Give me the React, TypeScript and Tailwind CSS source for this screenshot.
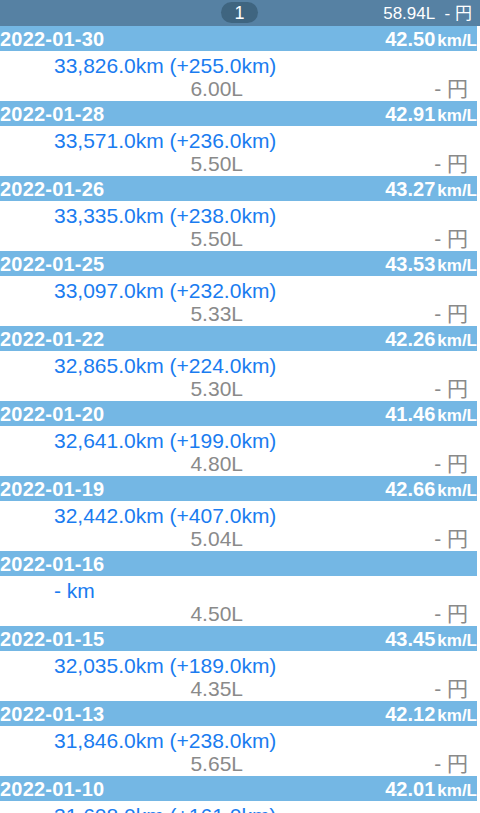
import React from 'react';

type Entry = {
  date: string;
  mileage: string | null;
  odo: string;
  liters: string;
};

const entries: Entry[] = [
  { date: '2022-01-30', mileage: '42.50', odo: '33,826.0km (+255.0km)', liters: '6.00L' },
  { date: '2022-01-28', mileage: '42.91', odo: '33,571.0km (+236.0km)', liters: '5.50L' },
  { date: '2022-01-26', mileage: '43.27', odo: '33,335.0km (+238.0km)', liters: '5.50L' },
  { date: '2022-01-25', mileage: '43.53', odo: '33,097.0km (+232.0km)', liters: '5.33L' },
  { date: '2022-01-22', mileage: '42.26', odo: '32,865.0km (+224.0km)', liters: '5.30L' },
  { date: '2022-01-20', mileage: '41.46', odo: '32,641.0km (+199.0km)', liters: '4.80L' },
  { date: '2022-01-19', mileage: '42.66', odo: '32,442.0km (+407.0km)', liters: '5.04L' },
  { date: '2022-01-16', mileage: null, odo: '- km', liters: '4.50L' },
  { date: '2022-01-15', mileage: '43.45', odo: '32,035.0km (+189.0km)', liters: '4.35L' },
  { date: '2022-01-13', mileage: '42.12', odo: '31,846.0km (+238.0km)', liters: '5.65L' },
  { date: '2022-01-10', mileage: '42.01', odo: '31,608.0km (+161.0km)', liters: '5.00L' },
];

const font = { fontFamily: '"Liberation Sans", "Noto Sans CJK JP", sans-serif' };

function Row({ e }: { e: Entry }) {
  return (
    <div>
      <div className="flex h-[25px] w-[477px] items-center justify-between bg-[#74b7e4] text-white">
        <span className="text-[20px] font-bold leading-none tracking-[0.2px]">{e.date}</span>
        {e.mileage && (
          <span className="flex items-baseline font-bold leading-none">
            <span className="text-[20px]">{e.mileage}</span>
            <span className="ml-[2px] text-[17px]">km/L</span>
          </span>
        )}
      </div>
      <div className="h-[50px] bg-white">
        <div className="flex h-[25px] items-end pl-[54px] text-[21px] leading-none text-[#1a7cf0]">
          {e.odo}
        </div>
        <div className="flex h-[25px] items-center text-[21px] leading-none text-[#8a8a8a]">
          <span className="w-[243px] text-right">{e.liters}</span>
          <span className="ml-auto mr-[12px]">- 円</span>
        </div>
      </div>
    </div>
  );
}

export default function App() {
  return (
    <div className="h-[813px] w-[480px] overflow-hidden bg-white" style={font}>
      <div className="relative flex h-[26px] items-center justify-end bg-[#5681a3] pr-[8px] text-white">
        <div className="absolute left-[221px] top-[2px] flex h-[21px] w-[37px] items-center justify-center rounded-full bg-[#3f6580] text-[18px] leading-none">
          1
        </div>
        <span className="text-[17px] leading-none">58.94L&nbsp;&nbsp;- 円</span>
      </div>
      {entries.map((e) => (
        <Row key={e.date} e={e} />
      ))}
    </div>
  );
}
